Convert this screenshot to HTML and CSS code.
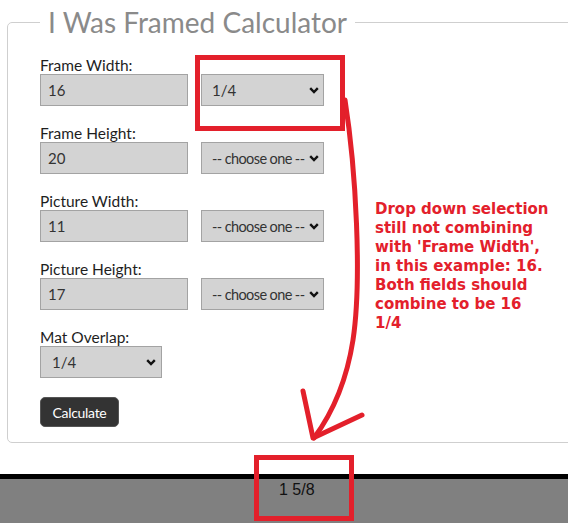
FILE: index.html
```html
<!DOCTYPE html>
<html>
<head>
<meta charset="utf-8">
<link rel="stylesheet" href="styles.css">
</head>
<body>
<div class="page">
  <fieldset class="calc">
    <legend class="calc-title">I Was Framed Calculator</legend>

    <div class="field">
      <label class="field-label">Frame Width:</label>
      <div class="field-row">
        <input class="num" type="text" value="16">
        <div class="sel">
          <select class="sel-box"><option>1/4</option></select>
          <svg class="chev" width="10" height="7" viewBox="0 0 10 7"><polyline points="1.2,1.2 5,5 8.8,1.2" fill="none" stroke="#111" stroke-width="2.4"/></svg>
        </div>
      </div>
    </div>

    <div class="field">
      <label class="field-label">Frame Height:</label>
      <div class="field-row">
        <input class="num" type="text" value="20">
        <div class="sel">
          <select class="sel-box sel-choose"><option>-- choose one --</option></select>
          <svg class="chev" width="10" height="7" viewBox="0 0 10 7"><polyline points="1.2,1.2 5,5 8.8,1.2" fill="none" stroke="#111" stroke-width="2.4"/></svg>
        </div>
      </div>
    </div>

    <div class="field">
      <label class="field-label">Picture Width:</label>
      <div class="field-row">
        <input class="num" type="text" value="11">
        <div class="sel">
          <select class="sel-box sel-choose"><option>-- choose one --</option></select>
          <svg class="chev" width="10" height="7" viewBox="0 0 10 7"><polyline points="1.2,1.2 5,5 8.8,1.2" fill="none" stroke="#111" stroke-width="2.4"/></svg>
        </div>
      </div>
    </div>

    <div class="field">
      <label class="field-label">Picture Height:</label>
      <div class="field-row">
        <input class="num" type="text" value="17">
        <div class="sel">
          <select class="sel-box sel-choose"><option>-- choose one --</option></select>
          <svg class="chev" width="10" height="7" viewBox="0 0 10 7"><polyline points="1.2,1.2 5,5 8.8,1.2" fill="none" stroke="#111" stroke-width="2.4"/></svg>
        </div>
      </div>
    </div>

    <div class="field">
      <label class="field-label">Mat Overlap:</label>
      <div class="field-row">
        <div class="sel sel-mat">
          <select class="sel-box"><option>1/4</option></select>
          <svg class="chev" width="10" height="7" viewBox="0 0 10 7"><polyline points="1.2,1.2 5,5 8.8,1.2" fill="none" stroke="#111" stroke-width="2.4"/></svg>
        </div>
      </div>
    </div>

    <button class="calc-btn" type="button">Calculate</button>
  </fieldset>

  <div class="result">1 5/8</div>

  <svg class="marks" width="568" height="523" viewBox="0 0 568 523">
    <g fill="none" stroke="#e3202b" stroke-width="5" stroke-linecap="round" stroke-linejoin="round">
      <rect x="197.5" y="57.5" width="145" height="71" stroke-linecap="butt" stroke-linejoin="miter"/>
      <rect x="256.5" y="457.5" width="95" height="61" stroke-linecap="butt" stroke-linejoin="miter"/>
      <path d="M345,100 C356,170 362,280 353,340 C346,385 331,415 314,438"/>
      <path d="M303,391 L313,438 L362,415"/>
    </g>
  </svg>

  <div class="note">Drop down selection<br>still not combining<br>with 'Frame Width',<br>in this example: 16.<br>Both fields should<br>combine to be 16<br>1/4</div>
</div>
</body>
</html>
```

FILE: styles.css
```css
html, body {
  margin: 0;
  padding: 0;
  overflow: hidden;
  background: #fff;
}

.page {
  position: relative;
  width: 568px;
  height: 523px;
  overflow: hidden;
  padding-top: 4px;
  box-sizing: border-box;
  font-family: Lato, "Noto Sans", sans-serif;
}

.calc {
  margin: 0 0 0 7px;
  width: 620px;
  box-sizing: border-box;
  border: 1px solid #cfcfcf;
  border-radius: 5px;
  padding: 16px 32px 15px 32px;
  display: flex;
  flex-direction: column;
  gap: 18px;
}

.calc-title {
  padding: 0 8px;
  font-size: 28px;
  line-height: 36px;
  color: #8a8a8a;
  font-weight: 400;
}

.field {
  display: flex;
  flex-direction: column;
}

.field-label {
  font-size: 15.5px;
  line-height: 18px;
  color: #1e1e1e;
}

.field-row {
  display: flex;
  gap: 13px;
  align-items: flex-start;
}

.num {
  width: 148px;
  height: 32px;
  box-sizing: border-box;
  margin: 0;
  padding: 0 7px;
  border: 1px solid #a3a3a3;
  background: #d3d3d3;
  font-family: Lato, "Noto Sans", sans-serif;
  font-size: 15px;
  color: #333;
  outline: none;
}

.sel {
  position: relative;
  width: 123px;
  height: 32px;
}

.sel-mat {
  width: 122px;
}

.sel-box {
  appearance: none;
  -webkit-appearance: none;
  width: 100%;
  height: 100%;
  box-sizing: border-box;
  margin: 0;
  padding: 0 0 0 10px;
  border: 1px solid #a3a3a3;
  border-radius: 0;
  background: #d3d3d3;
  font-family: Lato, "Noto Sans", sans-serif;
  font-size: 15px;
  color: #333;
}

.sel-choose {
  font-size: 14.5px;
  letter-spacing: -0.6px;
}

.sel-mat .sel-box {
  padding-left: 11px;
}

.chev {
  position: absolute;
  right: 5px;
  top: 13px;
}

.sel-mat .chev {
  right: 6px;
}

.calc-btn {
  align-self: flex-start;
  margin-top: 1px;
  width: 79px;
  height: 30px;
  padding: 0;
  border: 1px solid #555;
  border-radius: 5px;
  background: #333;
  color: #fff;
  font-family: Lato, "Noto Sans", sans-serif;
  font-size: 14px;
  letter-spacing: -0.3px;
}

.result {
  margin-top: 31px;
  border-top: 5px solid #000;
  background: #808080;
  height: 60px;
  padding: 2px 0 0 279px;
  font-family: "Liberation Sans", Arial, sans-serif;
  font-size: 16px;
  color: #111;
}

.marks {
  position: absolute;
  left: 0;
  top: 0;
}

.note {
  position: absolute;
  left: 375px;
  top: 200px;
  font-family: "DejaVu Sans", sans-serif;
  font-weight: 700;
  font-size: 15px;
  line-height: 19px;
  color: #e3202b;
  white-space: nowrap;
}
```
